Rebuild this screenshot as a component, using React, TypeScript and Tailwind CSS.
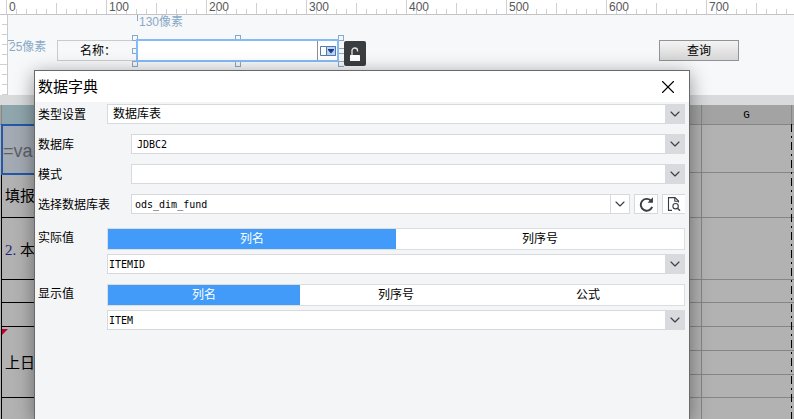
import { useState } from "react";
import type { ReactNode } from "react";
import { ChevronDown, X } from "lucide-react";

const TICKS = [0, 1, 2, 3, 4, 5, 6, 7, 8, 9];

// Report rows. `span` merges the first column over several rows.
const ROWS: Array<{ height: string; span?: number; cell?: ReactNode; skip?: boolean; note?: boolean }> = [
  { height: "h-[48px]", cell: "=va" },
  { height: "h-[45px]", cell: "填报" },
  {
    height: "h-[62px]",
    cell: (
      <>
        <span className="font-['Liberation_Serif',serif] text-[#1d1f7a]">2. </span>本
      </>
    ),
  },
  { height: "h-[23px]" },
  { height: "h-[24px]" },
  { height: "h-[24px]", span: 3, cell: "上日", note: true },
  { height: "h-[24px]", skip: true },
  { height: "h-[23px]", skip: true },
  { height: "h-[24px]" },
];

function TopRuler() {
  // one segment covers 100px, with a tick every 10px
  const segments = Array.from({ length: Math.ceil((window.innerWidth - 6) / 100) }, (_, i) => i * 100);
  return (
    <div className="flex h-[15px] overflow-hidden border-b border-[#c4c4c6] bg-white pl-[6px]">
      {segments.map((start) => (
        <div key={start} className="relative flex w-[100px] shrink-0 items-end">
          {TICKS.map((t) => (
            <span
              key={t}
              className={`w-[10px] border-l border-[#cfd0d4] ${t === 0 ? "h-[15px]" : t === 5 ? "h-[11px]" : "h-[5px]"}`}
            />
          ))}
          <span className="absolute top-0 left-[3px] text-[12px] leading-[14px] text-[#58585a]">{start}</span>
        </div>
      ))}
    </div>
  );
}

function SideRuler() {
  return (
    <div className="flex w-2 shrink-0 flex-col items-end overflow-hidden border-r border-[#c9cacd] bg-white">
      {[1, 2, 3, 4, 5, 6, 7, 8].map((t) => (
        <span key={t} className={`h-[10px] shrink-0 border-b border-[#cfd0d4] ${t === 5 ? "w-full" : "w-[5px]"}`} />
      ))}
    </div>
  );
}

function Handle({ className }: { className: string }) {
  return <span className={`absolute h-[6px] border-[#8aa9c6] bg-[#f6f7fa] ${className}`} />;
}

function ParameterPane() {
  return (
    <div className="flex h-[80px] bg-[#f6f8fa]">
      <SideRuler />
      {/* free canvas: every widget carries its own coordinates */}
      <div className="relative flex-1 text-[12px] leading-[14px]">
        <span className="absolute top-0 left-[129px] h-[6px] border-l border-[#8aa9c6]" />
        <span className="absolute top-0 left-[131px] text-[#8aa9c6]">130像素</span>
        <span className="absolute top-[25px] left-0 w-[6px] border-t border-[#8aa9c6]" />
        <span className="absolute top-[25px] left-[1px] text-[#8aa9c6]">25像素</span>

        <label
          htmlFor="param-name"
          className="absolute top-[25px] left-[49px] flex h-[21px] w-[80px] items-center border border-[#cacbcd] pl-[22px] text-black"
        >
          名称：
        </label>
        <Handle className="top-[20px] left-[124px] w-[6px] border" />
        <Handle className="top-[20px] left-[227px] w-[6px] border" />
        <Handle className="top-[20px] left-[330px] w-[6px] border" />
        <Handle className="top-[33px] left-[124px] w-[6px] border" />
        <Handle className="top-[33px] left-[330px] w-[6px] border-y" />
        <Handle className="top-[46px] left-[124px] w-[6px] border" />
        <Handle className="top-[46px] left-[227px] w-[6px] border" />
        <Handle className="top-[46px] left-[330px] w-[6px] border-y border-l" />
        <div className="absolute top-[24px] left-[128px] flex h-[23px] w-[203px] border-2 border-[#83bbf6] bg-white">
          <input id="param-name" className="min-w-0 flex-1 px-1 outline-none" />
          <button type="button" aria-label="展开" className="flex w-5 items-center justify-center border-l border-[#8d8f94]">
            <svg width="16" height="10" viewBox="0 0 16 10">
              <path d="M.5.5h15v9H.5z" fill="#fff" stroke="#5679ac" />
              <path d="M6.5.5h9v9h-9z" fill="#b9d3f2" stroke="#5679ac" />
              <path d="M8 3h6v1l-3 3.500-3-3.500z" fill="#1d3a8a" />
            </svg>
          </button>
        </div>
        <button
          type="button"
          aria-label="解锁"
          className="absolute top-[26px] left-[336px] flex h-[25px] w-[22px] items-center justify-center rounded-[2px] bg-[#3b3e41]"
        >
          <svg width="12" height="14" viewBox="0 0 12 14" fill="none">
            <path d="M3 8V3.600C3 .1 8.500 .1 8.500 3.600V4.500" stroke="#e4e4e4" strokeWidth="1.300" />
            <rect x="1" y="8" width="10" height="6" rx=".5" fill="#fff" />
          </svg>
        </button>

        <button
          type="button"
          className="absolute top-[25px] left-[651px] h-[21px] w-[80px] border border-[#929396] bg-linear-to-b from-[#f4f4f4] to-[#d6d6d6] text-black"
        >
          查询
        </button>
      </div>
    </div>
  );
}

function Sheet() {
  return (
    <div className="relative flex-1 overflow-hidden bg-[#b2b2b2]">
      <table className="w-full table-fixed border-separate border-spacing-0 text-[15px] text-black">
        <colgroup>
          <col className="w-[2px]" />
          <col className="w-[300px]" />
          <col />
          <col className="w-[90px]" />
          <col className="w-[2px]" />
        </colgroup>
        <thead>
          <tr className="h-[20px] bg-[#a3a3a3] font-['Liberation_Mono',monospace] text-[11px] leading-[12px]">
            <th className="border-r border-b border-[#868686] p-0" />
            <th className="border-b border-[#868686] bg-[#8fa6ad] p-0" />
            <th className="border-r border-b border-[#868686] p-0" />
            <th className="border-r border-b border-[#868686] p-0 font-normal">G</th>
            <th className="border-b border-[#868686] p-0" />
          </tr>
        </thead>
        <tbody>
          {ROWS.map((row, i) => (
            <tr key={i} className={row.height}>
              <td className="border-r border-black p-0" />
              {row.skip ? null : i === 0 ? (
                <td className="relative bg-[#a4aab3] p-0">
                  <span className="absolute -inset-x-px -top-px -bottom-[2px] flex items-center border-2 border-[#2259a8] pt-1 font-['Liberation_Sans',sans-serif] text-[18px] text-[#5d6166]">
                    {row.cell}
                  </span>
                </td>
              ) : (
                <td rowSpan={row.span} className="relative border-b border-black p-0 pt-[2px] pl-[3px] leading-[18px]">
                  {row.note ? (
                    <svg className="absolute top-[2px] left-0" width="6" height="6">
                      <path d="M0 0h6L0 6z" fill="#c4002c" />
                    </svg>
                  ) : null}
                  {row.cell}
                </td>
              )}
              <td className="border-r border-b border-[#868686] p-0" />
              <td className="border-b border-[#868686] p-0" />
              <td className="border-b border-[#868686] p-0" />
            </tr>
          ))}
        </tbody>
      </table>
      {/* page break marker */}
      <span className="absolute top-[19px] right-[2px] bottom-0 w-px bg-[repeating-linear-gradient(to_bottom,#000_0_8px,transparent_8px_12px,#000_12px_14px,transparent_14px_18px)]" />
    </div>
  );
}

interface ComboProps {
  id: string;
  value?: string;
  mono?: boolean;
  tight?: boolean;
  light?: boolean;
}

function Combo({ id, value = "", mono, tight, light }: ComboProps) {
  return (
    <div className="grid h-5 min-w-0 flex-1 grid-cols-1">
      <select
        id={id}
        defaultValue={value}
        className={`col-start-1 row-start-1 w-full appearance-none border border-[#d8d9dc] bg-white text-black outline-none ${
          mono ? "font-['DejaVu_Sans_Mono',monospace] text-[10px]" : "text-[12px]"
        } ${tight ? "pl-px" : light ? "pl-[3px]" : "pl-[5px]"}`}
      >
        <option>{value}</option>
      </select>
      <span
        className={`pointer-events-none col-start-1 row-start-1 flex w-5 items-center justify-center justify-self-end border ${
          light ? "border-[#d8d9dc] bg-white" : "border-[#d8dadd] bg-[#d8dadd]"
        }`}
      >
        <ChevronDown size={16} strokeWidth={1.7} className="shrink-0 text-[#3c3e42]" />
      </span>
    </div>
  );
}

function Tabs({ items, label }: { items: string[]; label: string }) {
  const [active, setActive] = useState(0);
  return (
    <div role="tablist" aria-label={label} className="flex h-[22px] border border-[#dcdde0] bg-white">
      {items.map((item, i) => (
        <button
          key={item}
          type="button"
          role="tab"
          aria-selected={i === active}
          onClick={() => setActive(i)}
          className={`flex-1 ${i === active ? "bg-[#429bf9] text-white" : "text-black"}`}
        >
          {item}
        </button>
      ))}
    </div>
  );
}

function Field({ id, label, children }: { id: string; label: string; children: ReactNode }) {
  return (
    <div className="flex gap-1">
      <label htmlFor={id} className="w-[89px] shrink-0 leading-[22px] whitespace-nowrap">
        {label}
      </label>
      {children}
    </div>
  );
}

function ValueField({ id, label, tabs, value }: { id: string; label: string; tabs: string[]; value: string }) {
  return (
    <div className="flex">
      <label htmlFor={id} className="w-[69px] shrink-0 leading-5">
        {label}
      </label>
      <div className="flex flex-1 flex-col gap-1">
        <Tabs items={tabs} label={label} />
        <div className="flex">
          <Combo id={id} value={value} mono tight />
        </div>
      </div>
    </div>
  );
}

function DictionaryDialog() {
  return (
    <section
      role="dialog"
      aria-labelledby="dict-title"
      className="absolute top-[70px] right-[104px] bottom-0 left-[34px] border border-b-0 border-[#67696b] bg-[#f4f5f7] text-[12px] text-black shadow-[0_4px_18px_rgba(0,0,0,0.42)]"
    >
      <header className="flex h-[31px] items-center justify-between bg-white pl-[3px]">
        <h2 id="dict-title" className="text-[15px] leading-5">
          数据字典
        </h2>
        <button type="button" aria-label="关闭" className="flex w-[42px] justify-center">
          <X size={22} strokeWidth={1.2} />
        </button>
      </header>

      <div className="flex flex-col gap-2 pt-[2px] pr-1 pl-[3px]">
        <div className="flex">
          <label htmlFor="dict-type" className="w-[69px] shrink-0 leading-[22px]">
            类型设置
          </label>
          <Combo id="dict-type" value="数据库表" />
        </div>
        <Field id="dict-db" label="数据库">
          <Combo id="dict-db" value="JDBC2" mono />
        </Field>
        <Field id="dict-schema" label="模式">
          <Combo id="dict-schema" />
        </Field>
        <Field id="dict-table" label="选择数据库表">
          <Combo id="dict-table" value="ods_dim_fund" mono light />
          <button
            type="button"
            aria-label="刷新"
            className="flex h-5 w-6 items-center justify-center border border-[#d8d9dc] bg-white"
          >
            <svg width="15" height="15" viewBox="0 0 14 14" fill="none">
              <path d="M11 3.300A5.500 5.500 0 1 0 12.300 9.300" stroke="#3a3c40" strokeWidth="1.800" />
              <path d="M13 .300V5.300H8z" fill="#3a3c40" />
            </svg>
          </button>
          <button
            type="button"
            aria-label="预览"
            className="flex h-5 w-[23px] items-center justify-center border border-r-0 border-[#d8d9dc] bg-white"
          >
            <svg width="14" height="14" viewBox="0 0 14 14" fill="none" stroke="#3a3c40" strokeWidth="1.100">
              <path d="M5 13.400H1.500V.600H8l3.500 3.500V5.500" />
              <path d="M7.800 .600V4.200H11.500" />
              <circle cx="8.600" cy="9.200" r="2.700" />
              <path d="M10.500 11.200L13 13.700" strokeWidth="1.400" />
            </svg>
          </button>
        </Field>

        <div className="flex flex-col gap-[10px] pt-1">
          <ValueField id="dict-actual" label="实际值" tabs={["列名", "列序号"]} value="ITEMID" />
          <ValueField id="dict-display" label="显示值" tabs={["列名", "列序号", "公式"]} value="ITEM" />
        </div>
      </div>
    </section>
  );
}

export default function App() {
  return (
    <main className="relative flex h-screen min-h-[360px] flex-col overflow-hidden bg-[#d9dadb] font-['Liberation_Sans','Noto_Sans_CJK_SC',sans-serif]">
      <TopRuler />
      <ParameterPane />
      <div className="h-[10px] shrink-0" />
      <Sheet />
      <DictionaryDialog />
    </main>
  );
}
